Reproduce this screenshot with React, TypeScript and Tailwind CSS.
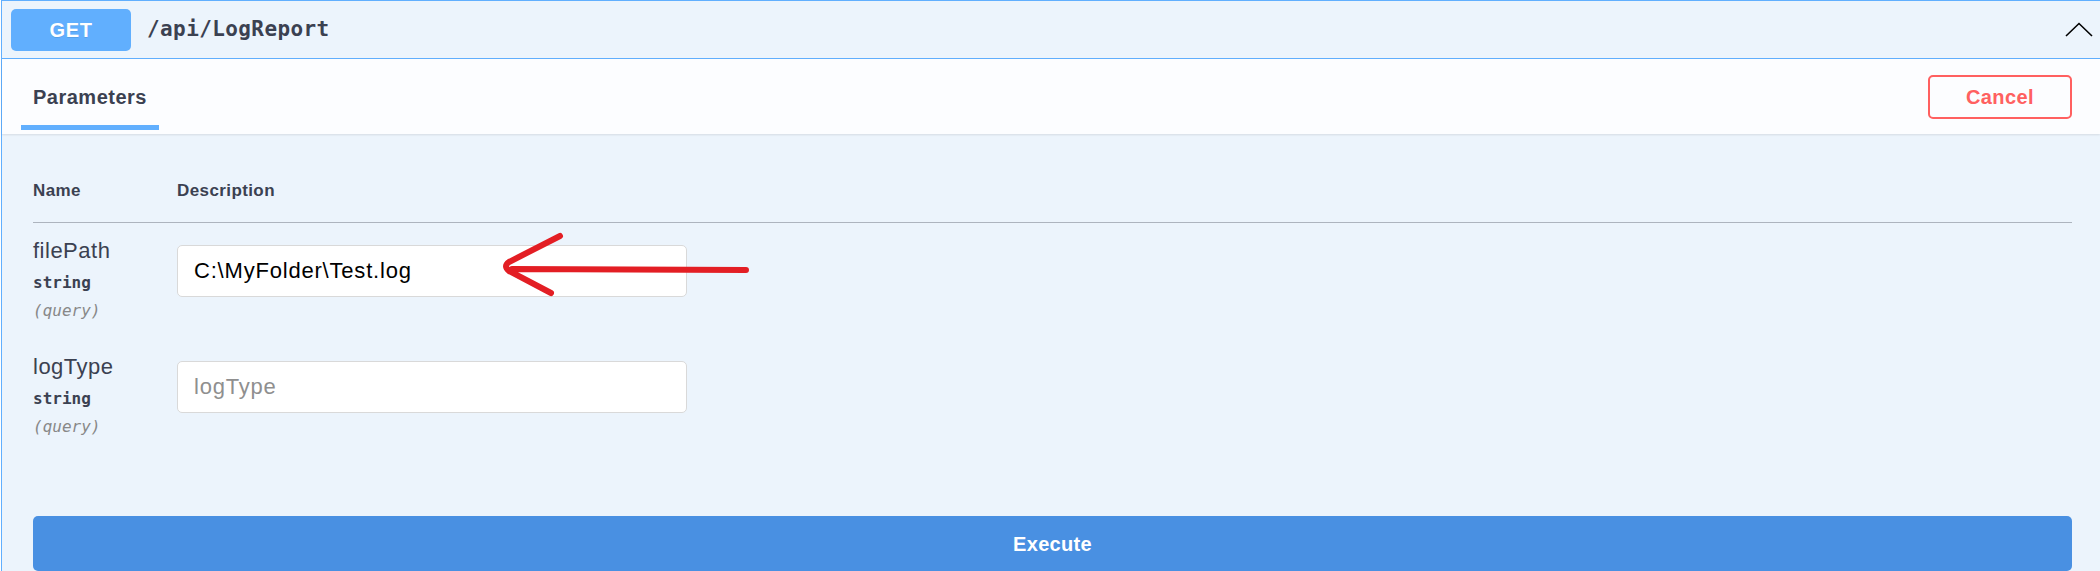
import { useState } from "react";

const params = [
  { name: "filePath", type: "string", location: "query", value: "C:\\MyFolder\\Test.log" },
  { name: "logType", type: "string", location: "query", value: "" },
];

export default function App() {
  const [values, setValues] = useState(params.map((p) => p.value));

  return (
    <div className="relative w-[2100px] h-[571px] overflow-hidden bg-white pl-[1px] font-['Liberation_Sans',Arial,sans-serif] text-[#3b4151]">
      <div className="border-t border-l border-[#61affe] bg-[#ecf4fc] h-[600px]">
        {/* Summary bar */}
        <div className="flex items-center h-[58px] border-b border-[#61affe] pl-[9px] pr-[7px]">
          <span className="flex items-center justify-center w-[120px] h-[42px] rounded-[5px] bg-[#61affe] text-white font-bold text-[20px] tracking-[0.6px] [text-shadow:0_1px_0_rgba(0,0,0,0.1)]">
            GET
          </span>
          <span className="ml-[16px] font-['DejaVu_Sans_Mono',monospace] font-semibold text-[21px] tracking-[0.4px] text-[#3b4151]">
            /api/LogReport
          </span>
          <svg className="ml-auto" width="28" height="16" viewBox="0 0 28 16" fill="none">
            <polyline points="1,14 14,1.5 27,14" stroke="#000" strokeWidth="1.6" />
          </svg>
        </div>

        {/* Section header with tab */}
        <div className="relative z-10 flex items-stretch justify-between h-[75px] bg-[#fcfdff] pl-[19px] pr-[28px] shadow-[0_1px_2px_rgba(0,0,0,0.1)]">
          <div className="flex flex-col w-[138px]">
            <span className="pt-[24px] pl-[12px] leading-[28px] text-[20px] font-bold tracking-[0.5px]">Parameters</span>
            <span className="mt-auto mb-[4px] h-[5px] bg-[#61affe]" />
          </div>
          <button className="self-center w-[144px] h-[44px] border-2 border-[#ff6060] rounded-[5px] text-[#ff6060] font-bold text-[20px] tracking-[0.4px]">
            Cancel
          </button>
        </div>

        {/* Parameters table */}
        <div className="pl-[31px] pr-[28px] pt-[47px]">
          <div className="grid grid-cols-[144px_1fr] pb-[21px] border-b border-[#adb4be] text-[17px] leading-[20px] font-bold tracking-[0.4px]">
            <span>Name</span>
            <span>Description</span>
          </div>

          {params.map((p, i) => (
            <div key={p.name} className="grid grid-cols-[144px_1fr] h-[116px]">
              <div className="pt-[15px] flex flex-col">
                <span className="text-[22px] leading-[25px] tracking-[0.5px]">{p.name}</span>
                <span className="mt-[10px] font-['DejaVu_Sans_Mono',monospace] font-semibold text-[16px] leading-[20px]">
                  {p.type}
                </span>
                <span className="mt-[8px] font-['DejaVu_Sans_Mono',monospace] italic text-[16px] leading-[20px] text-[#888]">
                  ({p.location})
                </span>
              </div>
              <div className="pt-[22px]">
                <input
                  value={values[i]}
                  placeholder={p.name}
                  onChange={(e) => setValues(values.map((v, j) => (j === i ? e.target.value : v)))}
                  className="w-[510px] h-[52px] bg-white border border-[#d9d9d9] rounded-[5px] pl-[16px] text-[22px] tracking-[0.8px] text-black placeholder:text-[#8f8f8f] outline-none"
                />
              </div>
            </div>
          ))}

          <button className="mt-[61px] w-full h-[55px] rounded-[5px] bg-[#4990e2] text-white font-bold text-[20px] tracking-[0.3px]">
            Execute
          </button>
        </div>
      </div>

      {/* hand-drawn annotation arrow */}
      <svg className="absolute left-0 top-0 pointer-events-none" width="2100" height="571" fill="none">
        <path
          d="M560 236 L509 262 Q503 266 509 271 L551 293 M512 269 L746 270"
          stroke="#e31e24"
          strokeWidth="6"
          strokeLinecap="round"
          strokeLinejoin="round"
        />
      </svg>
    </div>
  );
}
